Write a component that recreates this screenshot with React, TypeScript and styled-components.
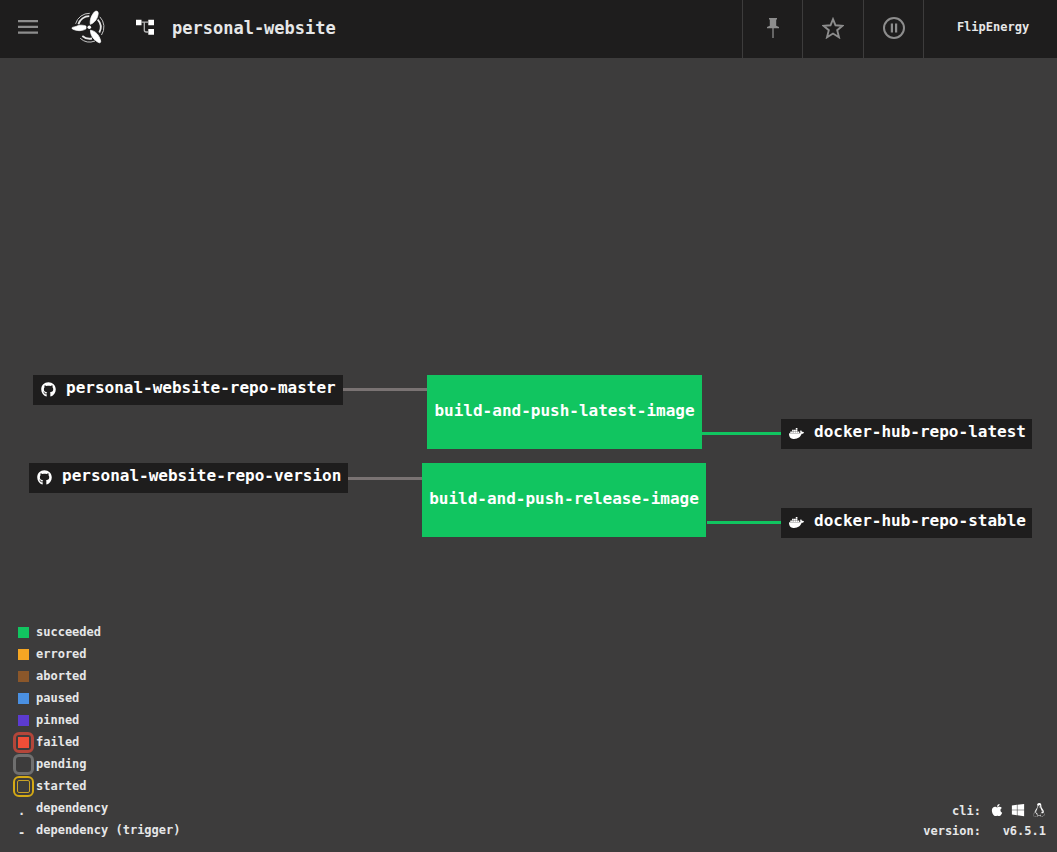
import React from "react";
import styled, { createGlobalStyle } from "styled-components";
import { FaApple, FaGithub, FaWindows, FaLinux } from "react-icons/fa";

const GlobalStyle = createGlobalStyle`
  *, *::before, *::after { box-sizing: border-box; }
  body {
    margin: 0;
    background: #3d3c3c;
    color: #e6e7e8;
    font-family: "DejaVu Sans Mono", "Liberation Mono", monospace;
    font-weight: 700;
    font-size: 12px;
  }
  a { color: inherit; text-decoration: none; }
  ul { list-style: none; margin: 0; padding: 0; }
`;

const Page = styled.div`
  min-height: 100vh;
  display: flex;
  flex-direction: column;
`;

const TopBar = styled.header`
  display: flex;
  align-items: stretch;
  height: 58px;
  background: #1e1d1d;
`;

const IconButton = styled.button<{ $width: number; $divided?: boolean }>`
  display: flex;
  align-items: center;
  justify-content: center;
  width: ${(p) => p.$width}px;
  padding: 0 0 2px;
  border: 0;
  border-left: ${(p) => (p.$divided ? "1px solid #3d3c3c" : "0")};
  background: none;
  color: #8d8d8d;
  cursor: pointer;
`;

const LogoLink = styled.a`
  display: flex;
  align-items: center;
  padding: 0 24px 4px 15px;
`;

const Breadcrumb = styled.a`
  display: flex;
  align-items: center;
  gap: 17px;
  margin-right: auto;
  padding: 0 0 2px 6px;
  font-size: 17px;
`;

const UserButton = styled.button`
  width: 134px;
  padding: 0 0 4px 5px;
  border: 0;
  border-left: 1px solid #3d3c3c;
  background: none;
  color: #e6e7e8;
  font: inherit;
  cursor: pointer;
`;

const Main = styled.main`
  flex: 1;
  display: grid;
`;

const GraphArea = styled.section`
  grid-area: 1 / 1;
  display: flex;
  align-items: center;
  justify-content: center;
  padding: 2px 25px 0 29px;
`;

const Graph = styled.div`
  position: relative;
  flex: none;
  width: 1003px;
  height: 162px;
`;

type Placed = { $x: number; $y: number; $w: number };

const ResourceNode = styled.a<Placed>`
  position: absolute;
  left: ${(p) => p.$x}px;
  top: ${(p) => p.$y}px;
  width: ${(p) => p.$w}px;
  height: 30px;
  display: flex;
  align-items: center;
  gap: 10px;
  padding-left: 8px;
  background: #1e1d1d;
  color: #fff;
  font-size: 16px;
  line-height: 20px;
  white-space: nowrap;
  svg { flex: none; margin-bottom: 1px; }
`;

const NodeLabel = styled.span`
  padding-bottom: 4px;
`;

const JobNode = styled.a<Placed>`
  position: absolute;
  left: ${(p) => p.$x}px;
  top: ${(p) => p.$y}px;
  width: ${(p) => p.$w}px;
  height: 74px;
  display: flex;
  align-items: center;
  justify-content: center;
  padding-bottom: 3px;
  background: #11c560;
  color: #fff;
  font-size: 16px;
  white-space: nowrap;
`;

const Edge = styled.span<Placed & { $color: string }>`
  position: absolute;
  left: ${(p) => p.$x}px;
  top: ${(p) => p.$y}px;
  width: ${(p) => p.$w}px;
  height: 3px;
  background: ${(p) => p.$color};
`;

const Footer = styled.footer`
  grid-area: 1 / 1;
  align-self: end;
  display: flex;
  align-items: flex-end;
  justify-content: space-between;
  padding: 0 11px 11px 18px;
  pointer-events: none;
  a { pointer-events: auto; }
`;

const LegendItem = styled.li`
  display: flex;
  align-items: center;
  gap: 7px;
  height: 22px;
`;

const Swatch = styled.span<{ $color: string }>`
  width: 11px;
  height: 11px;
  flex: none;
  background: ${(p) => p.$color};
`;

const Ring = styled.span<{ $color: string; $width: number }>`
  display: flex;
  align-items: center;
  justify-content: center;
  width: 21px;
  height: 21px;
  margin: 0 -5px;
  border: ${(p) => p.$width}px solid ${(p) => p.$color};
  border-radius: 6px;
`;

const InnerRing = styled.span`
  width: 13px;
  height: 13px;
  border: 1px solid #c9a227;
  border-radius: 2px;
`;

const LineSample = styled.span`
  width: 11px;
  padding-top: 6px;
`;

const Info = styled.dl`
  display: grid;
  grid-template-columns: auto auto;
  column-gap: 9px;
  row-gap: 4px;
  margin: 0 0 2px;
  line-height: 16px;
  text-align: right;
  dd { margin: 0; }
`;

const CliLinks = styled.dd`
  display: flex;
  align-items: flex-start;
  gap: 7px;
  color: #fff;
  a { display: flex; }
`;

const ConcourseLogo = () => (
  <svg width="34" height="34" viewBox="0 0 34 34" fill="#fff" aria-hidden="true">
    <circle cx="18.3" cy="17.3" r="1.8" />
    <g stroke="#fff" strokeWidth="0.700" strokeLinejoin="round">
      <path d="M19.300 14.300C18.600 10 20.500 5 23.600 1.800C25 .6 27.200 .9 27.200 3.200C27 8.200 23.500 13 19.300 14.300Z" />
      <path d="M15 16.100C12 14.900 8 14.600 5 16.500L1.400 17.400C.7 17.900 .9 18.700 1.600 19C6 21.200 11.500 21.200 15 18.800Z" />
      <path d="M19.400 20.200C24.500 20.900 28.200 25 29.700 31C29.900 32.700 28.800 33.200 27.500 32.500C22.700 29.900 19.400 25.500 19.400 20.200Z" />
    </g>
    <g fill="none" stroke="#fff">
      <g strokeWidth="1" opacity="0.75">
        <path d="M4.600 13.800A14.300 14.300 0 0 1 18.800 3.300" />
        <path d="M28.800 6.800A14.500 14.500 0 0 1 30.500 25" />
        <path d="M24 31A14.300 14.300 0 0 1 9.200 28.300" />
      </g>
      <g strokeWidth="1.800" opacity="0.9">
        <path d="M7.400 14.200A11.300 11.300 0 0 1 18.300 6.200" />
        <path d="M26.700 9.600A11.300 11.300 0 0 1 28.300 22.500" />
        <path d="M21 28.500A11.300 11.300 0 0 1 11.300 26" />
      </g>
    </g>
  </svg>
);

const DockerIcon = ({ size }: { size: number }) => (
  <svg width={size} height={size} viewBox="2 2 20 20" fill="currentColor" aria-hidden="true">
    <path d="M21.810 10.250c-.060-.040-.560-.430-1.640-.430c-.280 0-.560.030-.840.080c-.210-1.400-1.380-2.110-1.430-2.140l-.290-.170l-.180.270c-.240.360-.430.770-.510 1.190c-.200.800-.080 1.560.330 2.210c-.490.280-1.290.350-1.460.350H2.620c-.340 0-.620.280-.620.630c0 1.150.180 2.300.580 3.380c.450 1.190 1.130 2.070 2 2.610c.980.600 2.590.940 4.420.940c.790 0 1.610-.070 2.420-.220c1.120-.200 2.200-.590 3.190-1.160A8.300 8.300 0 0 0 16.780 16c1.050-1.170 1.670-2.500 2.120-3.650h.190c1.140 0 1.850-.460 2.240-.850c.260-.240.450-.530.590-.870l.080-.240z" />
    <path d="M3.700 9.300h2.200v2H3.700zM6.120 9.300h2.200v2h-2.200zM8.600 9.300h2.200v2H8.600zM11.040 9.300h2.200v2h-2.200zM13.500 9.300h2.200v2h-2.200zM6.120 7.050h2.200V9.100h-2.200zM8.600 7.050h2.200V9.100H8.600zM11.040 7.050h2.200V9.100h-2.200zM11.040 4.800h2.200v2h-2.200z" />
  </svg>
);

const resources = [
  { name: "personal-website-repo-master", icon: FaGithub, x: 4, y: 0, w: 310 },
  { name: "personal-website-repo-version", icon: FaGithub, x: 0, y: 88, w: 319 },
  { name: "docker-hub-repo-latest", icon: DockerIcon, x: 752, y: 44, w: 251 },
  { name: "docker-hub-repo-stable", icon: DockerIcon, x: 752, y: 133, w: 251 },
];

const jobs = [
  { name: "build-and-push-latest-image", x: 398, y: 0, w: 275 },
  { name: "build-and-push-release-image", x: 393, y: 88, w: 284 },
];

const edges = [
  { x: 314, y: 13, w: 84, color: "#7a7373" },
  { x: 319, y: 102, w: 74, color: "#7a7373" },
  { x: 673, y: 57, w: 79, color: "#11c560" },
  { x: 678, y: 146, w: 74, color: "#11c560" },
];

const statuses = [
  { name: "succeeded", color: "#11c560" },
  { name: "errored", color: "#f5a623" },
  { name: "aborted", color: "#8b572a" },
  { name: "paused", color: "#4a90e2" },
  { name: "pinned", color: "#5c3bd1" },
];

export default function App() {
  return (
    <>
      <GlobalStyle />
      <Page>
        <TopBar>
          <IconButton $width={56} aria-label="Menu">
            <svg width="20" height="20" viewBox="0 0 20 20" fill="#8d8d8d" aria-hidden="true">
              <path d="M0 2h20v2.300H0zM0 7.800h20v2.300H0zM0 13.500h20v2.300H0z" />
            </svg>
          </IconButton>
          <LogoLink href="#" aria-label="Home">
            <ConcourseLogo />
          </LogoLink>
          <Breadcrumb href="#pipeline">
            <svg width="20" height="18" viewBox="0 0 20 18" fill="#fff" aria-hidden="true">
              <path d="M1 .7h5.500v5.500H1zM13.300 .7H19v5.500h-5.700zM13.300 10H19v5.700h-5.700z" />
              <path d="M6 3.200h7.500M9.300 3.200V11q0 2 2 2h2" fill="none" stroke="#b5b5b5" strokeWidth="1.300" />
            </svg>
            personal-website
          </Breadcrumb>
          <IconButton $width={60} $divided aria-label="Pin">
            <svg width="14" height="20" viewBox="0 0 14 20" fill="#8d8d8d" aria-hidden="true">
              <path d="M3 0h8v1.200l-.8 .6v5.900L13 9v1.300H1V9l2.800-1.300V1.800L3 1.200z" />
              <path d="M6.200 10h1.600v10H6.200z" opacity="0.8" />
            </svg>
          </IconButton>
          <IconButton $width={61} $divided aria-label="Favorite">
            <svg width="22" height="22" viewBox="0 0 22 22" fill="none" stroke="#8d8d8d" strokeWidth="1.900" aria-hidden="true">
              <path d="M11 2.200L13.500 8.300L20.500 8.800L15.200 13.200L17 20.300L11 16.500L5 20.300L6.800 13.200L1.500 8.800L8.500 8.300Z" />
            </svg>
          </IconButton>
          <IconButton $width={60} $divided aria-label="Pause">
            <svg width="22" height="22" viewBox="0 0 22 22" aria-hidden="true">
              <circle cx="11" cy="11" r="10" fill="none" stroke="#8d8d8d" strokeWidth="2" />
              <path d="M7.800 6.500H10v9H7.800zM12 6.500h2.200v9H12z" fill="#8d8d8d" />
            </svg>
          </IconButton>
          <UserButton>FlipEnergy</UserButton>
        </TopBar>
        <Main>
          <GraphArea>
            <Graph>
              {edges.map((e) => (
                <Edge key={`${e.x}-${e.y}`} $x={e.x} $y={e.y} $w={e.w} $color={e.color} />
              ))}
              {resources.map(({ name, icon: Icon, x, y, w }) => (
                <ResourceNode key={name} href={`#${name}`} $x={x} $y={y} $w={w}>
                  <Icon size={15} />
                  <NodeLabel>{name}</NodeLabel>
                </ResourceNode>
              ))}
              {jobs.map(({ name, x, y, w }) => (
                <JobNode key={name} href={`#${name}`} $x={x} $y={y} $w={w}>
                  {name}
                </JobNode>
              ))}
            </Graph>
          </GraphArea>
          <Footer>
            <ul>
              {statuses.map((s) => (
                <LegendItem key={s.name}>
                  <Swatch $color={s.color} />
                  {s.name}
                </LegendItem>
              ))}
              <LegendItem>
                <Ring $color="#b4463a" $width={3}>
                  <Swatch $color="#f04e37" />
                </Ring>
                failed
              </LegendItem>
              <LegendItem>
                <Ring $color="#6f6f6f" $width={3} />
                pending
              </LegendItem>
              <LegendItem>
                <Ring $color="#d4a915" $width={2}>
                  <InnerRing />
                </Ring>
                started
              </LegendItem>
              <LegendItem>
                <LineSample>.</LineSample>
                dependency
              </LegendItem>
              <LegendItem>
                <LineSample>-</LineSample>
                dependency (trigger)
              </LegendItem>
            </ul>
            <Info>
              <dt>cli:</dt>
              <CliLinks>
                <a href="#mac" aria-label="Download for macOS"><FaApple size={14} /></a>
                <a href="#windows" aria-label="Download for Windows"><FaWindows size={14} /></a>
                <a href="#linux" aria-label="Download for Linux"><FaLinux size={14} /></a>
              </CliLinks>
              <dt>version:</dt>
              <dd>v6.5.1</dd>
            </Info>
          </Footer>
        </Main>
      </Page>
    </>
  );
}
